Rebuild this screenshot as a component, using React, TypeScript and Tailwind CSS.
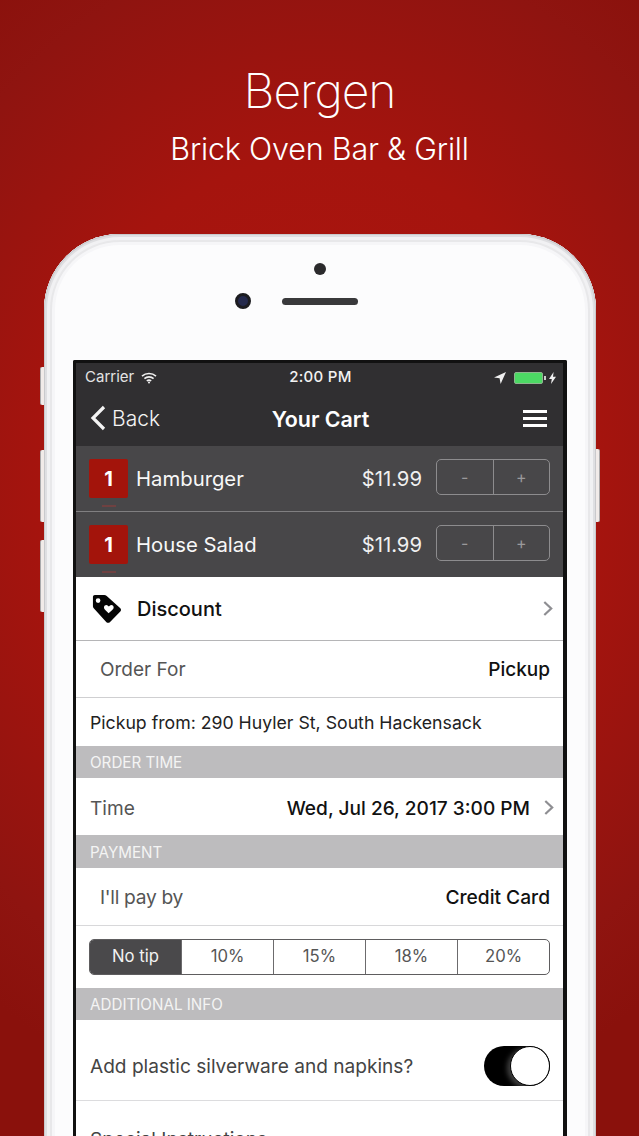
import React from "react";

const F = "font-['Inter','Liberation_Sans',sans-serif]";

function Stepper() {
  return (
    <div className="flex h-[36px] w-[114px] rounded-[5px] border border-[#8d8c8e]">
      <div className="flex flex-1 items-center justify-center border-r border-[#8d8c8e] text-[16px] text-[#9a999b]">-</div>
      <div className="flex flex-1 items-center justify-center text-[16px] text-[#9a999b]">+</div>
    </div>
  );
}

function CartItem({ name, last }: { name: string; last?: boolean }) {
  return (
    <div className={`flex items-start pl-[13px] pr-[13px] pt-[13px] ${last ? "h-[65px]" : "h-[66px] border-b border-[#807f81]"}`}>
      <div className="flex w-[39px] flex-col items-center">
        <div className="flex h-[39px] w-[39px] items-center justify-center rounded-[2px] bg-[#a3140b] text-[20px] font-bold text-white">1</div>
        <div className="mt-[7px] h-[2px] w-[14px] bg-[#6f4141]" />
      </div>
      <div className="ml-[8px] flex h-[39px] flex-1 items-center pt-[2px] text-[20.3px] text-[#f8f8f8]">{name}</div>
      <div className="mr-[14px] flex h-[39px] items-center pt-[2px] text-[20.3px] text-[#f0f0f0]">$11.99</div>
      <Stepper />
    </div>
  );
}

function Section({ label, tall }: { label: string; tall?: boolean }) {
  return <div className={`flex items-center bg-[#bdbcbe] pl-[14px] text-[15.2px] text-[#f4f4f4] ${tall ? "h-[33px] pt-[3px]" : "h-[32px] pt-[2px]"}`}>{label}</div>;
}

function Chevron() {
  return (
    <svg width="10" height="15" viewBox="0 0 10 15" fill="none" stroke="#8e8e92" strokeWidth="2.2">
      <path d="M1.300 1 8.200 7.500 1.300 14" />
    </svg>
  );
}

export default function App() {
  return (
    <div className={`${F} relative h-[1136px] w-[639px] overflow-hidden bg-[radial-gradient(540px_640px_at_50%_490px,#ae160f_0%,#a5140e_52%,#8f1410_85%,#8a110c_100%)]`}>
      <div className="flex h-[234px] flex-col items-center pt-[60px] text-white">
        <div className="text-[48px] font-extralight leading-[62px] tracking-[-1.1px]">Bergen</div>
        <div className="mt-[8px] text-[30.5px] font-light leading-[38px] tracking-[-0.2px]">Brick Oven Bar &amp; Grill</div>
      </div>

      {/* side buttons */}
      <div className="absolute left-[40px] top-[367px] h-[38px] w-[4px] rounded-l-[2px] border-l border-[#a9a9ab] bg-[#f1ebe9]" />
      <div className="absolute left-[40px] top-[450px] h-[72px] w-[4px] rounded-l-[2px] border-l border-[#a9a9ab] bg-[#f1ebe9]" />
      <div className="absolute left-[40px] top-[540px] h-[72px] w-[4px] rounded-l-[2px] border-l border-[#a9a9ab] bg-[#f1ebe9]" />
      <div className="absolute left-[596px] top-[449px] h-[73px] w-[4px] rounded-r-[2px] border-r border-[#a9a9ab] bg-[#f1ebe9]" />

      <div className="ml-[44px] h-[1000px] w-[552px] rounded-t-[76px] bg-[#fcfcfd] px-[29px] shadow-[inset_0_0_0_1px_#c9c9cc,inset_0_0_0_3px_#dfdfe2,inset_0_0_0_6px_#f1f1f3,inset_0_0_0_8px_#e8e8ea,inset_0_0_0_11px_#f6f6f8]">
        <div className="relative flex h-[126px] flex-col items-center">
          <div className="mt-[29px] h-[12px] w-[12px] rounded-full bg-[#2b2a2c]" />
          <div className="mt-[23px] h-[7px] w-[76px] rounded-full bg-[#39393b]" />
          <div className="absolute left-[162px] top-[59px] h-[16px] w-[16px] rounded-full border-[3px] border-[#1c1c20] bg-[#252a4d]" />
        </div>

        <div className="h-[800px] overflow-hidden rounded-t-[2px] border-l-[3px] border-r-[4px] border-t-[3px] border-[#111]">
          <div className="bg-[#302f31] pb-[2px] text-white">
            <div className="flex h-[29px] items-center justify-between pl-[9px] pr-[7px] text-[15px]">
              <div className="flex w-[170px] items-center gap-[7px] text-[#e4e4e4]">
                Carrier
                <svg width="16" height="12" viewBox="0 0 16 12" fill="none" stroke="#f0f0f0" strokeWidth="1.6">
                  <path d="M1 4.200C5 .6 11 .6 15 4.200" />
                  <path d="M3.400 6.600C6 4.300 10 4.300 12.600 6.600" />
                  <path d="M5.800 9C7 8 9 8 10.200 9" />
                  <circle cx="8" cy="10.600" r="1" fill="#f0f0f0" stroke="none" />
                </svg>
              </div>
              <div className="font-medium tracking-[0.3px] text-[#f2f2f2]">2:00 PM</div>
              <div className="flex w-[170px] items-center justify-end">
                <svg width="12" height="12" viewBox="0 0 12 12" fill="#f0f0f0"><path d="M12 0 0 5.400l5.600.9L6.600 12z" /></svg>
                <div className="ml-[8px] h-[12px] w-[29px] rounded-[2px] border border-[#8fb48f] bg-[#4cd964]" />
                <div className="ml-[1px] h-[4px] w-[2px] bg-[#ccc]" />
                <svg className="ml-[3px]" width="7" height="12" viewBox="0 0 7 12" fill="#f0f0f0"><path d="M4.600 0 0 7h2.800L2 12l5-7.200H4z" /></svg>
              </div>
            </div>
            <div className="flex h-[52px] items-center justify-between pl-[14px] pr-[16px]">
              <div className="flex w-[124px] items-center gap-[6px] text-[21px] font-light text-[#f4f4f4]">
                <svg width="16" height="26" viewBox="0 0 16 26" fill="none" stroke="#f4f4f4" strokeWidth="3.2">
                  <path d="M14 2 3 13l11 11" />
                </svg>
                <span className="pt-[2px]">Back</span>
              </div>
              <div className="pt-[2px] text-[21.4px] font-semibold">Your Cart</div>
              <div className="flex w-[120px] justify-end">
                <div className="flex w-[24px] flex-col gap-[4px]">
                  <div className="h-[3px] bg-white" />
                  <div className="h-[3px] bg-white" />
                  <div className="h-[3px] bg-white" />
                </div>
              </div>
            </div>
          </div>

          <div className="bg-[#484749]">
            <CartItem name="Hamburger" />
            <CartItem name="House Salad" last />
          </div>

          <div className="bg-white text-[#111]">
            <div className="flex h-[64px] items-center border-b border-[#b5b5b7] pl-[16px] pr-[10px]">
              <svg width="30" height="30" viewBox="0 0 32 32">
                <path fillRule="evenodd" fill="#050505" d="M3 1h10c1 0 2 .4 2.700 1.100l14.500 13c1 1 1 2.600 0 3.600L19 30c-1 1-2.600 1-3.600 0L2.100 15.500C1.400 14.800 1 14 1 13V3c0-1.100.9-2 2-2zm3.500 3.500a2.500 2.500 0 1 0 0 5 2.500 2.500 0 0 0 0-5zM17 12.500c-1.500-1.500-4-.5-4.200 1.500-.1 1.300.7 2.300 1.600 3.200l3.300 3.300 3.600-3.300c1-.9 1.900-1.900 1.800-3.200-.2-2-2.700-3-4.200-1.500l-.9.900z" />
              </svg>
              <div className="ml-[15px] flex-1 pt-[1px] text-[20px] font-medium">Discount</div>
              <Chevron />
            </div>
            <div className="flex h-[57px] items-center justify-between border-b border-[#cfcfd1] pl-[24px] pr-[13px] pt-[3px] text-[19px]">
              <span className="text-[#555]">Order For</span>
              <span className="font-medium">Pickup</span>
            </div>
            <div className="flex h-[48px] items-center pl-[14px] pt-[2px] text-[17.700px] text-[#222]">Pickup from: 290 Huyler St, South Hackensack</div>
            <Section label="ORDER TIME" />
            <div className="flex h-[57px] items-center justify-between pl-[14px] pr-[9px] pt-[3px] text-[19.100px]">
              <span className="text-[#555]">Time</span>
              <span className="flex items-center gap-[14px] font-medium">Wed, Jul 26, 2017 3:00 PM <Chevron /></span>
            </div>
            <Section label="PAYMENT" tall />
            <div className="flex h-[58px] items-center justify-between border-b border-[#d8d8da] pl-[24px] pr-[13px] pt-[2px] text-[19.200px]">
              <span className="tracking-[-0.3px] text-[#555]">I'll pay by</span>
              <span className="font-medium">Credit Card</span>
            </div>
            <div className="flex h-[62px] items-center px-[13px]">
              <div className="flex h-[36px] w-full overflow-hidden rounded-[5px] border border-[#5e5d5f] text-[16.700px] text-[#555]">
                <div className="flex flex-1 items-center justify-center bg-[#4a494b] text-[#f2f2f2]">No tip</div>
                <div className="flex flex-1 items-center justify-center border-l border-[#6c6b6d]">10%</div>
                <div className="flex flex-1 items-center justify-center border-l border-[#6c6b6d]">15%</div>
                <div className="flex flex-1 items-center justify-center border-l border-[#6c6b6d]">18%</div>
                <div className="flex flex-1 items-center justify-center border-l border-[#6c6b6d]">20%</div>
              </div>
            </div>
            <Section label="ADDITIONAL INFO" />
            <div className="flex h-[81px] items-center justify-between border-b border-[#dcdcde] pl-[14px] pr-[13px] pt-[12px] text-[19.100px] text-[#444]">
              <span>Add plastic silverware and napkins?</span>
              <div className="flex h-[40px] w-[66px] justify-end rounded-full bg-black">
                <div className="h-[40px] w-[40px] rounded-full border border-black bg-white shadow-[-3px_2px_5px_rgba(255,255,255,0.25)]" />
              </div>
            </div>
            <div className="pl-[14px] pt-[24px] text-[19.100px] text-[#444]">Special Instructions</div>
          </div>
        </div>
      </div>
    </div>
  );
}
